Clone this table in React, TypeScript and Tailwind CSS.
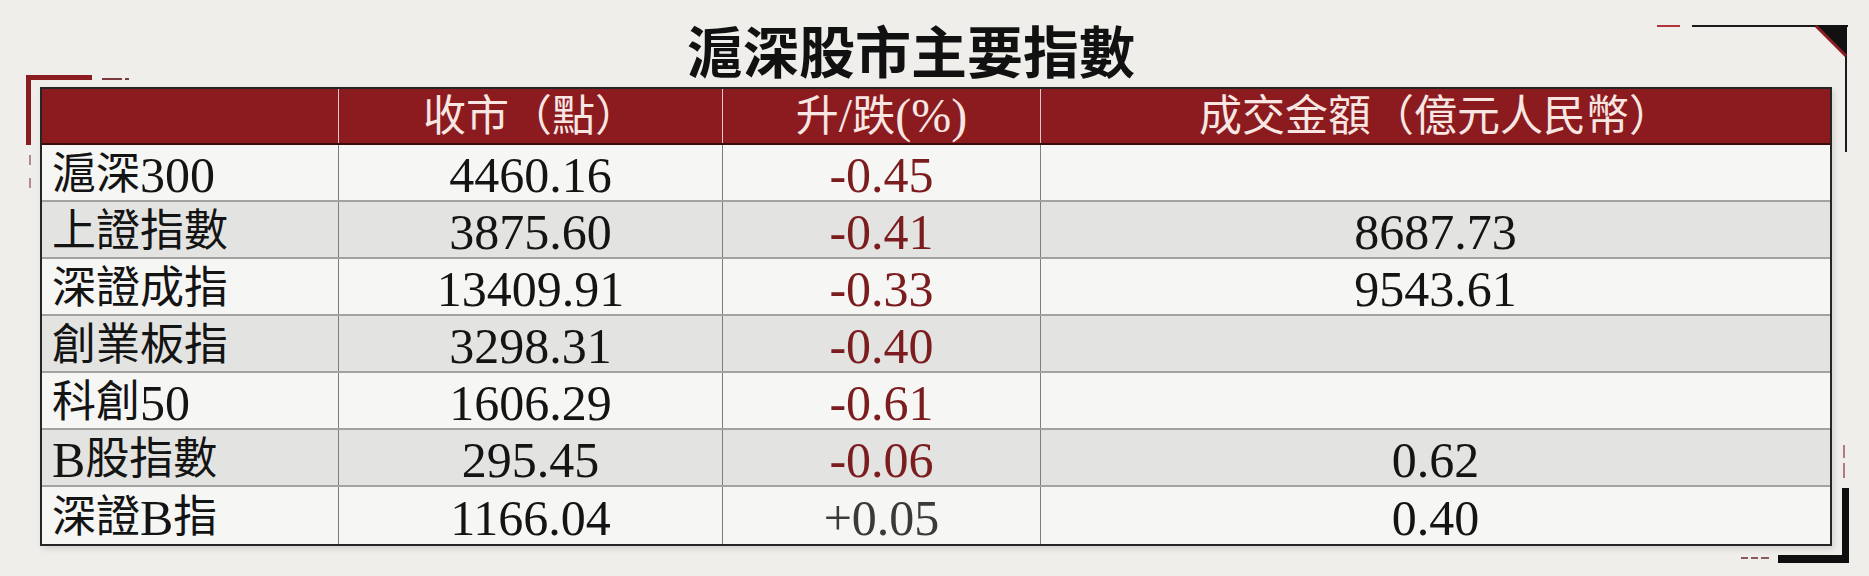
import React from "react";

interface IndexRow {
  name: string;
  close: string;
  change: string;
  turnover: string;
}

const ROWS: IndexRow[] = [
  { name: "滬深300", close: "4460.16", change: "-0.45", turnover: "" },
  { name: "上證指數", close: "3875.60", change: "-0.41", turnover: "8687.73" },
  { name: "深證成指", close: "13409.91", change: "-0.33", turnover: "9543.61" },
  { name: "創業板指", close: "3298.31", change: "-0.40", turnover: "" },
  { name: "科創50", close: "1606.29", change: "-0.61", turnover: "" },
  { name: "B股指數", close: "295.45", change: "-0.06", turnover: "0.62" },
  { name: "深證B指", close: "1166.04", change: "+0.05", turnover: "0.40" },
];

const CJK = /[\u3000-\u9fff\uff00-\uffef]/;

// CJK glyphs sit a bit smaller than the latin digits in the source
function Mixed({ text, cjkClass = "text-[44px]", latinClass = "" }: { text: string; cjkClass?: string; latinClass?: string }) {
  const parts = text.split(/([\u3000-\u9fff\uff00-\uffef]+)/).filter(Boolean);
  return (
    <>
      {parts.map((part, i) => (
        <span key={i} className={CJK.test(part) ? cjkClass : latinClass}>
          {part}
        </span>
      ))}
    </>
  );
}

function CornerTopLeft() {
  return (
    <svg className="absolute left-[24px] top-[74px]" width="110" height="120" viewBox="0 0 110 120">
      <rect x="2" y="1" width="66" height="5" fill="#8b1c22" />
      <rect x="2" y="1" width="5" height="70" fill="#8b1c22" />
      <rect x="78" y="4" width="20" height="2" fill="#7a3a3e" />
      <rect x="101" y="4" width="4" height="2" fill="#7a3a3e" />
      <rect x="5" y="81" width="2" height="10" fill="#b08a8c" />
      <rect x="5" y="104" width="2" height="10" fill="#b08a8c" />
    </svg>
  );
}

function CornerTopRight() {
  return (
    <svg className="absolute left-[1650px] top-[22px]" width="200" height="132" viewBox="0 0 200 132">
      <rect x="7" y="3" width="23" height="2" fill="#b3343c" />
      <rect x="42" y="3" width="156" height="2" fill="#1a1a1a" />
      <rect x="195" y="3" width="2" height="127" fill="#1a1a1a" />
      <polygon points="165,3 197,3 197,35" fill="#111" />
      <line x1="166" y1="4" x2="196" y2="34" stroke="#8b1c22" strokeWidth="3" />
    </svg>
  );
}

function CornerBottomRight() {
  return (
    <svg className="absolute left-[1738px] top-[442px]" width="114" height="124" viewBox="0 0 114 124">
      <rect x="104" y="46" width="7" height="75" fill="#0f0f0f" />
      <rect x="40" y="113" width="71" height="8" fill="#0f0f0f" />
      <rect x="3" y="115" width="7" height="2" fill="#8a5a5c" />
      <rect x="13" y="115" width="7" height="2" fill="#8a5a5c" />
      <rect x="23" y="115" width="8" height="2" fill="#8a5a5c" />
      <rect x="105" y="3" width="2" height="13" fill="#b07a7e" />
      <rect x="105" y="21" width="2" height="15" fill="#b07a7e" />
    </svg>
  );
}

function HeaderRow() {
  const cell =
    "flex items-center justify-center border-l border-[#e6c9c9] text-[43px] leading-none text-[#f7e6e2]";
  return (
    <div className="grid h-[56px] grid-cols-[296px_384px_318px_1fr] border-b-2 border-[#3a0c0e] bg-[#8c1b20]">
      <div />
      <div className={cell}>收市（點）</div>
      <div className={cell}>
        <Mixed text="升/跌(%)" cjkClass="" latinClass="text-[48px]" />
      </div>
      <div className={cell}>成交金額（億元人民幣）</div>
    </div>
  );
}

function BodyRow({ row, index, last }: { row: IndexRow; index: number; last: boolean }) {
  const bg = index % 2 === 0 ? "bg-[#f6f6f4]" : "bg-[#e3e3e1]";
  const changeColor = row.change.startsWith("-") ? "text-[#7b1c1f]" : "text-[#3a3a3a]";
  const num = "flex items-center justify-center border-l border-[#7d7d7d] pt-[4px]";
  return (
    <div
      className={`grid h-[57px] grid-cols-[296px_384px_318px_1fr] ${bg} ${
        last ? "" : "border-b-2 border-[#a2a2a2]"
      }`}
    >
      <div className="flex items-center pl-[10px] pt-[4px]">
        <Mixed text={row.name} />
      </div>
      <div className={num}>{row.close}</div>
      <div className={`${num} ${changeColor}`}>{row.change}</div>
      <div className={num}>{row.turnover}</div>
    </div>
  );
}

export default function App() {
  return (
    <div className="relative h-[576px] w-full overflow-hidden bg-[#efeeea] font-['Liberation_Serif','Noto_Sans_CJK_TC',serif]">
      <CornerTopLeft />
      <CornerTopRight />
      <CornerBottomRight />
      <div className="flex h-[87px] items-center justify-center pr-[47px] pt-[10px]">
        <h1 className="font-['Noto_Sans_CJK_TC',sans-serif] text-[56px] font-bold leading-none text-[#111]">
          滬深股市主要指數
        </h1>
      </div>
      <div className="relative ml-[40px] w-[1792px] border-2 border-[#262626] text-[50px] leading-none text-[#141414] shadow-[2px_3px_6px_rgba(0,0,0,0.12)]">
        <HeaderRow />
        {ROWS.map((row, i) => (
          <BodyRow key={row.name} row={row} index={i} last={i === ROWS.length - 1} />
        ))}
      </div>
    </div>
  );
}
